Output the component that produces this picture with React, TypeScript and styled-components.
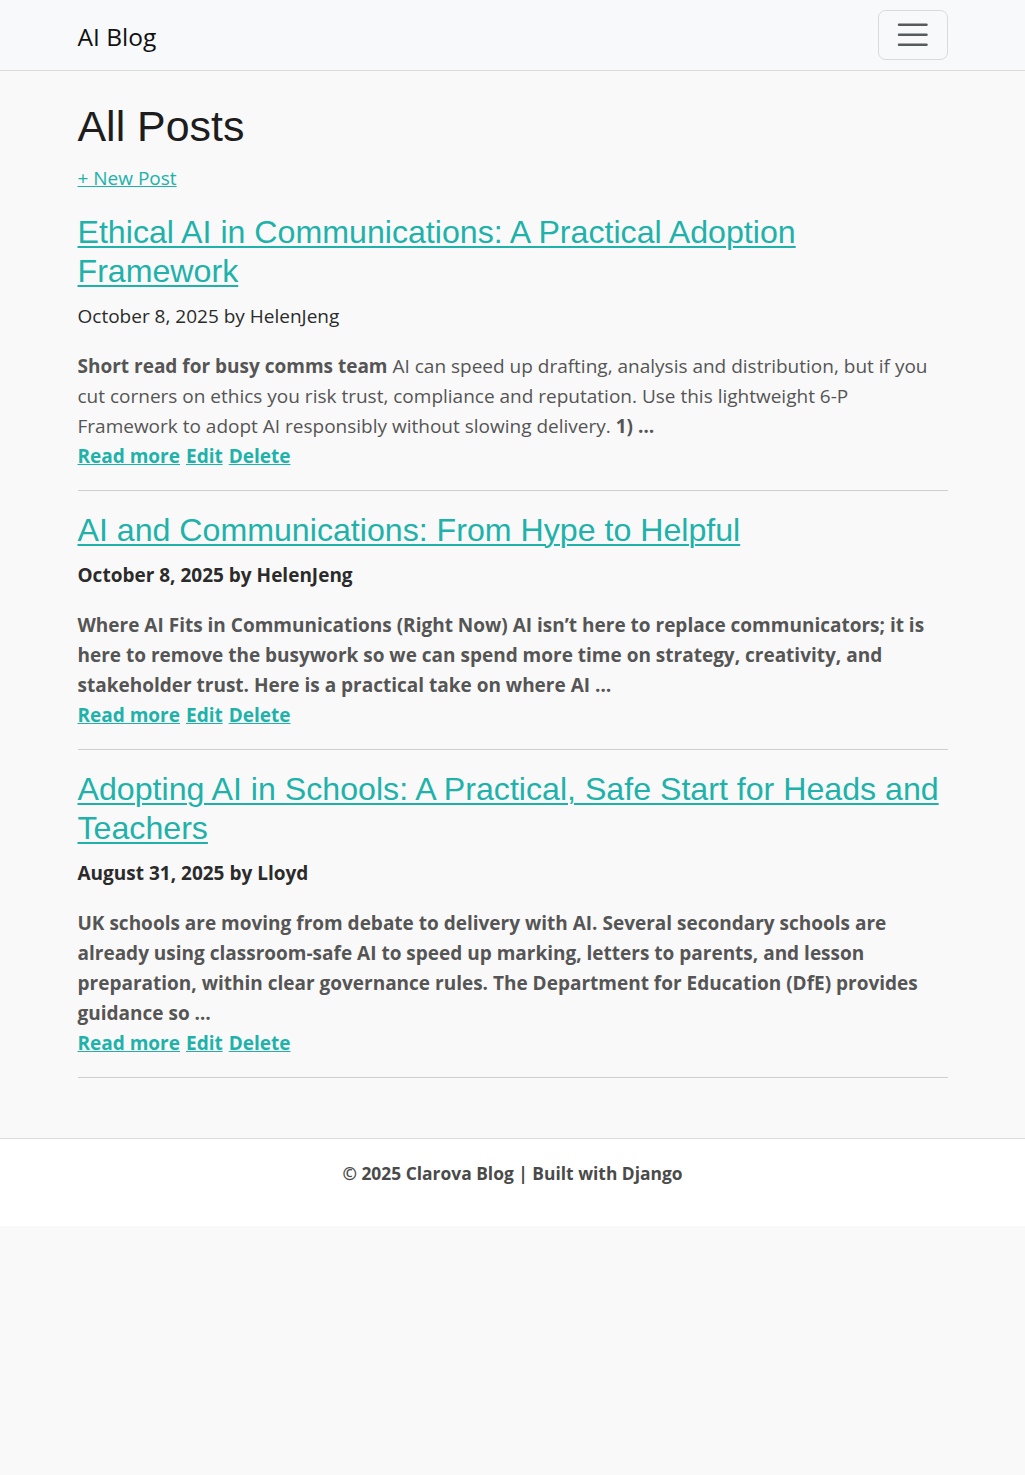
import React from "react";
import styled, { createGlobalStyle } from "styled-components";

const GlobalStyle = createGlobalStyle`
  html {
    font-size: 20px;
  }
  body {
    margin: 0;
    background-color: #f9f9f9;
    color: #212529;
    font-family: "Open Sans", "Noto Sans", sans-serif;
    font-size: 19px;
    line-height: 30px;
  }
  * {
    box-sizing: border-box;
  }
`;

const teal = "#20b2aa";

const NavBar = styled.nav`
  background-color: #f8f9fa;
  border-bottom: 1px solid #dcdcdc;
  padding: 10px 0;
`;

const Container = styled.div`
  max-width: 900px;
  margin: 0 auto;
  padding: 0 15px;
`;

const NavInner = styled(Container)`
  display: flex;
  align-items: center;
  justify-content: space-between;
`;

const Brand = styled.a`
  font-size: 24.5px;
  line-height: 36px;
  padding-top: 3px;
  color: #111;
  text-decoration: none;
`;

const Toggler = styled.button`
  width: 70px;
  height: 50px;
  display: flex;
  align-items: center;
  justify-content: center;
  background: transparent;
  border: 1px solid rgba(0, 0, 0, 0.12);
  border-radius: 7.5px;
  padding: 0;
  cursor: pointer;
`;

const Main = styled(Container)`
  padding-top: 30px;
  padding-bottom: 40px;
`;

const PageTitle = styled.h1`
  font-family: "Liberation Sans", Arial, sans-serif;
  font-weight: 400;
  font-size: 42.9px;
  line-height: 51.5px;
  margin: 0 0 10px;
  color: #1d1d1d;
`;

const NewPostRow = styled.p`
  margin: 0 0 20px;
`;

const TealLink = styled.a<{ $bold?: boolean }>`
  color: ${teal};
  text-decoration: underline;
  font-weight: ${(p) => (p.$bold ? 700 : 400)};
`;

const PostTitle = styled.h3`
  font-family: "Liberation Sans", Arial, sans-serif;
  font-weight: 400;
  font-size: 32.15px;
  line-height: 39px;
  margin: 0 0 10px;

  a {
    color: ${teal};
    text-decoration: underline;
    text-decoration-thickness: 2px;
    text-underline-offset: 3px;
  }
`;

const Meta = styled.p<{ $bold?: boolean }>`
  margin: 0 0 20px;
  color: #2b2b2b;
  font-weight: ${(p) => (p.$bold ? 700 : 400)};
`;

const Excerpt = styled.div<{ $bold?: boolean }>`
  color: #555;
  font-weight: ${(p) => (p.$bold ? 700 : 400)};

  strong {
    font-weight: 700;
  }
`;

const Actions = styled.div`
  display: flex;
  gap: 6px;
`;

const Divider = styled.hr`
  border: 0;
  border-top: 1px solid #cfcfcf;
  margin: 19px 0 20px;
`;

const Footer = styled.footer`
  background-color: #fff;
  border-top: 1px solid #dcdcdc;
  padding: 19px 0 38px;
  text-align: center;
  color: #4a4a4a;
  font-size: 17.4px;
  font-weight: 700;
`;

type Post = {
  id: number;
  title: string;
  date: string;
  author: string;
  metaBold: boolean;
  excerptBold: boolean;
  excerpt: React.ReactNode;
};

const posts: Post[] = [
  {
    id: 1,
    title: "Ethical AI in Communications: A Practical Adoption Framework",
    date: "October 8, 2025",
    author: "HelenJeng",
    metaBold: false,
    excerptBold: false,
    excerpt: (
      <>
        <strong>Short read for busy comms team</strong> AI can speed up drafting,
        analysis and distribution, but if you cut corners on ethics you risk trust,
        compliance and reputation. Use this lightweight 6-P Framework to adopt AI
        responsibly without slowing delivery. <strong>1) …</strong>
      </>
    ),
  },
  {
    id: 2,
    title: "AI and Communications: From Hype to Helpful",
    date: "October 8, 2025",
    author: "HelenJeng",
    metaBold: true,
    excerptBold: true,
    excerpt:
      "Where AI Fits in Communications (Right Now) AI isn’t here to replace communicators; it is here to remove the busywork so we can spend more time on strategy, creativity, and stakeholder trust. Here is a practical take on where AI …",
  },
  {
    id: 3,
    title: "Adopting AI in Schools: A Practical, Safe Start for Heads and Teachers",
    date: "August 31, 2025",
    author: "Lloyd",
    metaBold: true,
    excerptBold: true,
    excerpt:
      "UK schools are moving from debate to delivery with AI. Several secondary schools are already using classroom-safe AI to speed up marking, letters to parents, and lesson preparation, within clear governance rules. The Department for Education (DfE) provides guidance so …",
  },
];

function MenuIcon() {
  return (
    <svg width="37.5" height="37.5" viewBox="0 0 30 30">
      <path
        d="M4 7h22M4 15h22M4 23h22"
        stroke="rgba(33,37,41,0.75)"
        strokeWidth="2"
        strokeLinecap="round"
        strokeMiterlimit="10"
      />
    </svg>
  );
}

function App() {
  return (
    <>
      <GlobalStyle />
      <NavBar>
        <NavInner>
          <Brand href="#">AI Blog</Brand>
          <Toggler aria-label="Toggle navigation">
            <MenuIcon />
          </Toggler>
        </NavInner>
      </NavBar>
      <Main>
        <PageTitle>All Posts</PageTitle>
        <NewPostRow>
          <TealLink href="#">+ New Post</TealLink>
        </NewPostRow>
        {posts.map((post) => (
          <article key={post.id}>
            <PostTitle>
              <a href="#">{post.title}</a>
            </PostTitle>
            <Meta $bold={post.metaBold}>
              {post.date} by {post.author}
            </Meta>
            <Excerpt $bold={post.excerptBold}>{post.excerpt}</Excerpt>
            <Actions>
              <TealLink $bold href="#">
                Read more
              </TealLink>
              <TealLink $bold href="#">
                Edit
              </TealLink>
              <TealLink $bold href="#">
                Delete
              </TealLink>
            </Actions>
            <Divider />
          </article>
        ))}
      </Main>
      <Footer>© 2025 Clarova Blog | Built with Django</Footer>
    </>
  );
}

export default App;
